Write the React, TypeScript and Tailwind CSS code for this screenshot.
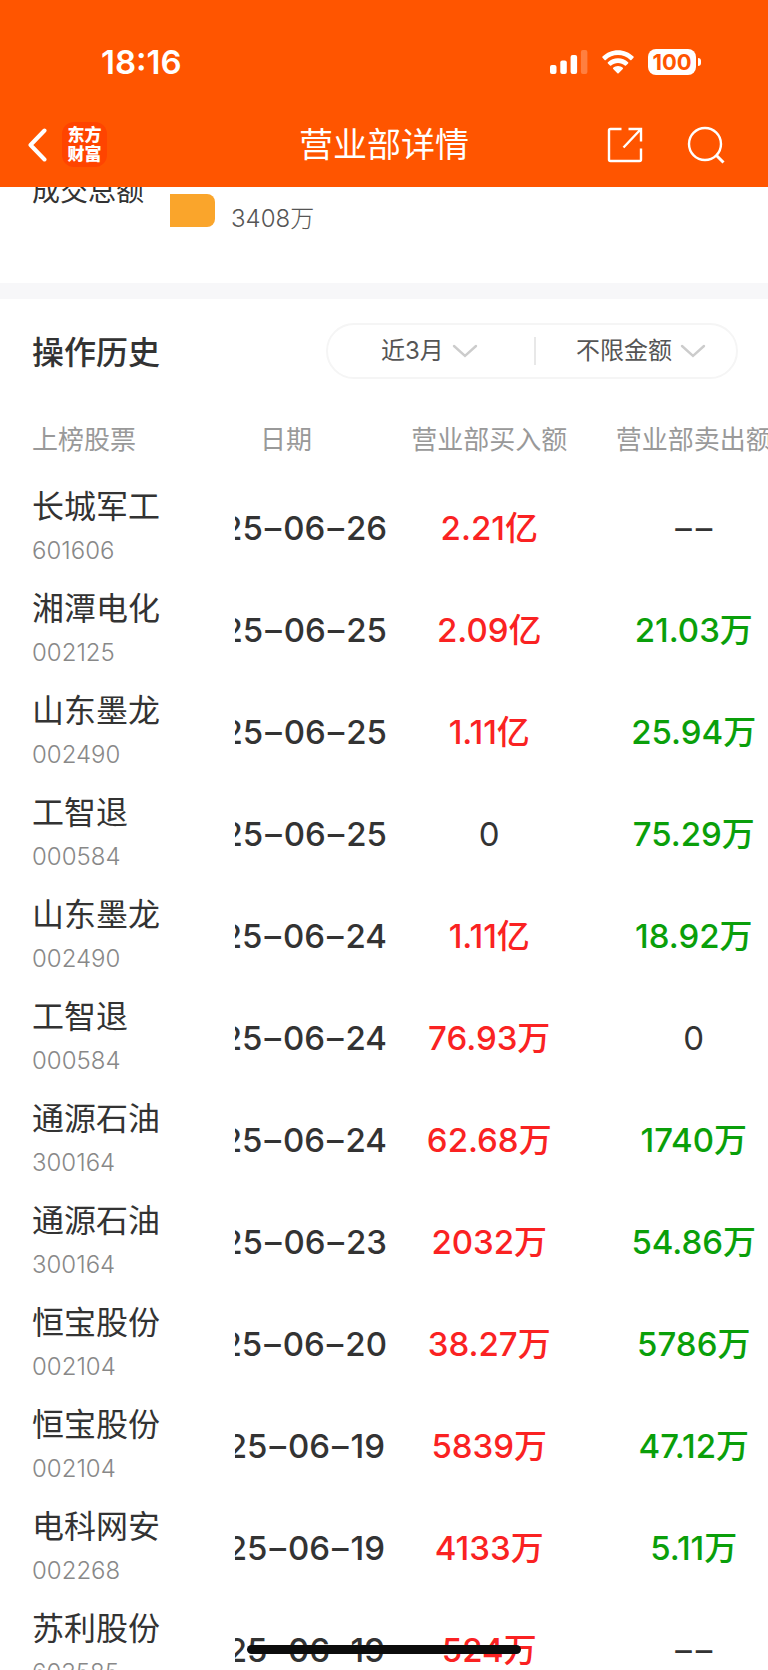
import React from "react";

type Trade = {
  name: string;
  code: string;
  date: string;
  buy: string;
  sell: string;
};

const trades: Trade[] = [
  { name: "长城军工", code: "601606", date: "2025–06–26", buy: "2.21亿", sell: "––" },
  { name: "湘潭电化", code: "002125", date: "2025–06–25", buy: "2.09亿", sell: "21.03万" },
  { name: "山东墨龙", code: "002490", date: "2025–06–25", buy: "1.11亿", sell: "25.94万" },
  { name: "工智退", code: "000584", date: "2025–06–25", buy: "0", sell: "75.29万" },
  { name: "山东墨龙", code: "002490", date: "2025–06–24", buy: "1.11亿", sell: "18.92万" },
  { name: "工智退", code: "000584", date: "2025–06–24", buy: "76.93万", sell: "0" },
  { name: "通源石油", code: "300164", date: "2025–06–24", buy: "62.68万", sell: "1740万" },
  { name: "通源石油", code: "300164", date: "2025–06–23", buy: "2032万", sell: "54.86万" },
  { name: "恒宝股份", code: "002104", date: "2025–06–20", buy: "38.27万", sell: "5786万" },
  { name: "恒宝股份", code: "002104", date: "2025–06–19", buy: "5839万", sell: "47.12万" },
  { name: "电科网安", code: "002268", date: "2025–06–19", buy: "4133万", sell: "5.11万" },
  { name: "苏利股份", code: "603585", date: "2025–06–19", buy: "524万", sell: "––" },
];

function SignalIcon() {
  return (
    <svg width="38" height="24" viewBox="0 0 38 24" fill="#fff" aria-hidden="true">
      <rect x="0" y="15" width="6.500" height="9" rx="2" />
      <rect x="10.300" y="10.500" width="6.500" height="13.500" rx="2" />
      <rect x="20.600" y="5" width="6.500" height="19" rx="2" />
      <rect x="30.900" y="0" width="6.500" height="24" rx="2" opacity="0.25" />
    </svg>
  );
}

function WifiIcon() {
  return (
    <svg width="32" height="24" viewBox="0 0 32 24" fill="#fff" aria-hidden="true">
      <path d="M16 0.300C22 0.300 27.500 2.700 31.500 6.600C31.900 7 31.900 7.400 31.500 7.800L29.400 9.900C29 10.300 28.600 10.300 28.200 9.900C24.900 6.800 20.700 5 16 5C11.300 5 7.100 6.800 3.800 9.900C3.400 10.300 3 10.300 2.600 9.900L0.500 7.800C0.100 7.400 0.100 7 0.500 6.600C4.500 2.700 10 0.300 16 0.300Z" />
      <path d="M16 8.300C19.900 8.300 23.400 9.800 26.100 12.200C26.500 12.600 26.500 13 26.100 13.400L24 15.500C23.600 15.900 23.200 15.900 22.800 15.500C21 13.900 18.600 13 16 13C13.400 13 11 13.900 9.200 15.500C8.800 15.900 8.400 15.900 8 15.500L5.900 13.400C5.500 13 5.500 12.600 5.900 12.200C8.600 9.800 12.100 8.300 16 8.300Z" />
      <path d="M16 16C17.900 16 19.500 16.700 20.800 17.800C21.200 18.200 21.200 18.600 20.800 19L16.600 23.200C16.200 23.600 15.800 23.600 15.400 23.200L11.200 19C10.800 18.600 10.800 18.200 11.200 17.800C12.500 16.700 14.100 16 16 16Z" />
    </svg>
  );
}

function BackIcon() {
  return (
    <svg width="20" height="34" viewBox="0 0 20 34" fill="none" stroke="#fff" strokeWidth="4" strokeLinecap="round" strokeLinejoin="round" aria-hidden="true">
      <path d="M16.500 2.500L2.500 17L16.500 31.500" />
    </svg>
  );
}

function ShareIcon() {
  return (
    <svg width="36" height="36" viewBox="0 0 36 36" fill="none" stroke="#fff" strokeWidth="2.400" aria-hidden="true">
      <path d="M14.500 2H3.500Q2 2 2 3.500V32.500Q2 34 3.500 34H32.500Q34 34 34 32.500V21.500" />
      <path d="M21.500 2H34V14.500M33.500 2.500L16.500 20.500" />
    </svg>
  );
}

function SearchIcon() {
  return (
    <svg width="38" height="38" viewBox="0 0 38 38" fill="none" stroke="#fff" strokeWidth="2.400" aria-hidden="true">
      <circle cx="18" cy="18" r="16" />
      <path d="M29 29L36.500 36.500" strokeWidth="3" />
    </svg>
  );
}

function ChevronDown() {
  return (
    <svg className="pointer-events-none" width="26" height="14" viewBox="0 0 26 14" fill="none" stroke="#ccc" strokeWidth="2.400" strokeLinecap="round" aria-hidden="true">
      <path d="M2 2L13 12L24 2" />
    </svg>
  );
}

function Filter({ label, options }: { label: string; options: string[] }) {
  return (
    <label className="flex items-center gap-2">
      <span className="sr-only">{label}</span>
      <select className="field-sizing-content h-10 appearance-none bg-transparent text-2xl leading-10 text-[#555] outline-none">
        {options.map((option) => (
          <option key={option}>{option}</option>
        ))}
      </select>
      <ChevronDown />
    </label>
  );
}

function Dashed({ text }: { text: string }) {
  return (
    <>
      {text.split(/(–)/).map((part, index) =>
        part === "–" ? (
          <span key={index} className="mx-0.5">
            –
          </span>
        ) : (
          part
        ),
      )}
    </>
  );
}

function Amount({ value, tone }: { value: string; tone: string }) {
  const traded = /[万亿]/.test(value);
  return (
    <td className={traded ? "text-center font-medium " + tone : "text-center text-[#333]"}>
      <Dashed text={value} />
    </td>
  );
}

export default function App() {
  return (
    <div className="relative flex h-dvh flex-col overflow-hidden bg-white font-['Inter','Noto_Sans_CJK_SC',sans-serif] text-[#333]">
      <header className="z-10 shrink-0 bg-[#ff5500] text-white">
        <div className="flex h-[104px] items-end justify-between pr-[67px] pl-[101px] pb-5">
          <span className="text-[33px] leading-[44px] font-semibold">18:16</span>
          <div className="flex h-[44px] items-center gap-3.5">
            <SignalIcon />
            <WifiIcon />
            <div className="flex items-center gap-0.5">
              <span className="flex h-[26px] w-12 items-center justify-center rounded-lg bg-white text-[22px] leading-none font-bold text-[#ff5500]">
                100
              </span>
              <span className="h-2 w-[3px] rounded-r-full bg-white" />
            </div>
          </div>
        </div>
        <nav className="grid h-[83px] grid-cols-[1fr_auto_1fr] items-center px-7 pb-0.5">
          <div className="flex items-center gap-3.5">
            <button type="button" aria-label="返回">
              <BackIcon />
            </button>
            <a href="#home" className="flex size-[45px] flex-col items-center justify-center rounded-xl bg-[#ff4400] text-[17px] leading-[19px] font-black">
              <span>东方</span>
              <span>财富</span>
            </a>
          </div>
          <h1 className="text-[34px] leading-[44px]">营业部详情</h1>
          <div className="flex items-center justify-end gap-11 pr-[15px]">
            <button type="button" aria-label="分享">
              <ShareIcon />
            </button>
            <button type="button" aria-label="搜索">
              <SearchIcon />
            </button>
          </div>
        </nav>
      </header>

      <section className="-mt-4 flex h-28 shrink-0 items-start pl-8">
        <span className="w-[138px] text-[28px] leading-10">成交总额</span>
        <span className="mt-[23px] h-[33px] w-[45px] rounded-r-lg bg-[#faa52b]" />
        <span className="mt-[30px] ml-4 text-2xl leading-9 font-light text-[#555]">3408万</span>
      </section>

      <div className="h-4 shrink-0 bg-[#f7f7f9]" />

      <main className="min-h-0 flex-1 overflow-hidden">
        <div className="flex items-center justify-between pt-6 pr-[30px] pl-8">
          <h2 className="pt-1 text-[32px] leading-[48px] font-medium">操作历史</h2>
          <div className="flex h-[56px] w-[412px] items-center justify-between rounded-full border-2 border-[#f5f5f5] pr-[30px] pl-[53px]">
            <Filter label="时间范围" options={["近3月"]} />
            <span className="ml-4 h-7 w-0.5 bg-[#e8e8e8]" />
            <Filter label="金额" options={["不限金额"]} />
          </div>
        </div>

        <table className="mt-9 w-full min-w-[796px] table-fixed">
          <colgroup>
            <col className="w-[235px]" />
            <col className="w-[152px]" />
            <col />
            <col />
          </colgroup>
          <thead>
            <tr className="h-[62px] align-top text-[26px] leading-9 text-[#999]">
              <th className="pt-[7px] pl-8 text-left font-normal">上榜股票</th>
              <th className="pt-[7px] pr-[50px] text-center font-normal">日期</th>
              <th className="pt-[7px] font-normal">营业部买入额</th>
              <th className="pt-[7px] font-normal">营业部卖出额</th>
            </tr>
          </thead>
          <tbody>
            {trades.map((trade, index) => (
              <tr key={index} className="h-[102px] text-[33px] leading-10">
                <td className="pl-8">
                  <div className="text-[32px]">{trade.name}</div>
                  <div className="pt-1.5 text-2xl leading-9 font-light text-[#888]">{trade.code}</div>
                </td>
                <td className="font-medium">
                  <div className="flex justify-end overflow-hidden">
                    <span className="min-w-[204px] shrink-0 text-center whitespace-nowrap">
                      <Dashed text={trade.date} />
                    </span>
                  </div>
                </td>
                <Amount value={trade.buy} tone="text-[#fa2222]" />
                <Amount value={trade.sell} tone="text-[#0a9f0a]" />
              </tr>
            ))}
          </tbody>
        </table>
      </main>

      <div className="absolute bottom-4 left-1/2 z-20 h-[9px] w-[274px] -translate-x-1/2 rounded-full bg-[#0c0c0c]" />
    </div>
  );
}
